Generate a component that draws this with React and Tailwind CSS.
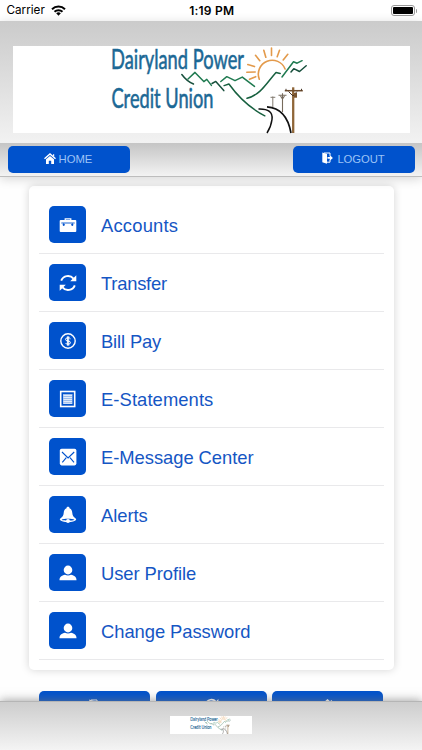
const BLUE = '#0052cc'

function Logo({ className }) {
  return (
    <svg viewBox="12.5 46 397 87" preserveAspectRatio="none" className={className} fill="none" overflow="visible">
      <rect x="12.5" y="46" width="397" height="87" fill="#fff" />
      <g fill="#1b6895" stroke="#1b6895" strokeWidth="0.6" fontFamily="Lato, 'Liberation Sans', sans-serif" fontSize="27">
        <text x="110.5" y="68.500" textLength="133" lengthAdjust="spacingAndGlyphs">Dairyland Power</text>
        <text x="111" y="107.800" textLength="102" lengthAdjust="spacingAndGlyphs">Credit Union</text>
      </g>
      {/* sun */}
      <g stroke="#e39a4b" strokeWidth="1.6" strokeLinecap="round">
        <path d="M258.8 79.2A13.7 13.7 0 1 1 284.6 69" />
        <path d="M271 48v7.5M263.3 50.3l2 7M279 50.3l-2.3 6.4M255 55.3l4.3 5.4M287.3 54.3l-4.6 5.7M247.3 64.6l6.7 2M246.3 72.3l8.4-.3M249 79.3l6.2-2.6" />
      </g>
      {/* mountains */}
      <g stroke="#1f7a50" strokeWidth="1.5" strokeLinecap="round" strokeLinejoin="round">
        <path d="M181.3 74.5Q186.5 81.5 193 84" stroke="#174f3c" />
        <path d="M187.5 79l7-6.6 8.8 9.2 3-2.2 4.6 6" />
        <path d="M211.5 83.5l3.8-2.1 8 9.2" stroke="#174f3c" />
        <path d="M220.3 81.5l6-4.8 8.2 4 7.3-3.6L254 86.4" />
        <path d="M223.6 85.6l4.8-1.6Q244 105.500 264.300 115.800" stroke="#17603f" />
        <path d="M246.500 98.300C260 95 266 83 275.500 72.400l4.200 1" stroke="#17603f" />
        <path d="M281.500 77L293 61.800l3.600 1.400 5-2.500" />
        <path d="M290.500 72l2.800-3.300 5.700 2.800 6.700-5.700" stroke="#174f3c" />
      </g>
      {/* road */}
      <path d="M258 109Q273 108.500 271.500 119.500 270.500 127 266.500 133" stroke="#111" strokeWidth="1.500" />
      <path d="M266.500 106.800Q286 108 290.500 133" stroke="#111" strokeWidth="1.700" />
      {/* utility poles */}
      <path d="M272.300 96.500V107M270 97.300h4.800" stroke="#827b70" strokeWidth="1" />
      <path d="M282 93.300V112M278 95.200h8M280 96l2 3 2-3" stroke="#776b5c" strokeWidth="1.100" />
      <path d="M292.700 87.300V133" stroke="#8f6638" strokeWidth="2.300" />
      <path d="M284.300 90.700h18" stroke="#6c4a2b" strokeWidth="1.500" />
      <path d="M285.500 88.800v1.700M301 88.800v1.700M288 91.500l4.500 4.500 4-4.500" stroke="#493728" strokeWidth="1" />
      <rect x="293.500" y="93" width="3" height="4.700" fill="#79542f" />
    </svg>
  )
}

function HomeIcon({ className }) {
  return (
    <svg viewBox="0 0 12 11" className={className} fill="none">
      <path d="M.5 5.700 6 1l5.500 4.700" stroke="#fff" strokeWidth="1.500" />
      <path d="M2 6.200 6 2.900l4 3.300V11H7.200V7.800H4.800V11H2z" fill="#fff" />
      <path d="M9 1.200h1.200v2.500L9 2.700z" fill="#fff" />
    </svg>
  )
}

function LogoutIcon({ className }) {
  return (
    <svg viewBox="0 0 11 12" className={className} fill="none">
      <path d="M.3.500 5 1.900V11.800L.3 10.200z" fill="#fff" />
      <path d="M2 1h6v2.700M8 7.800v2.400H5" stroke="#fff" />
      <path d="M5.500 5h2.300V3l3.100 2.900-3.100 2.900V6.800H5.500z" fill="#fff" />
    </svg>
  )
}

function RefreshIcon({ className }) {
  return (
    <svg viewBox="0 0 18 18" className={className} fill="none">
      <path d="M2.200 6.700A7.200 7.200 0 0 1 14.500 4.600M15.800 11.300A7.200 7.200 0 0 1 3.500 13.400" stroke="#fff" strokeWidth="1.900" />
      <path d="M17.300 1.200v6.100h-6.100zM.7 16.800v-6.100h6.100z" fill="#fff" />
    </svg>
  )
}

function BriefcaseIcon() {
  return (
    <svg viewBox="0 0 18 18" className="size-[18px]" fill="none">
      <path d="M6.200 4.500V2.900h5.600v1.600" stroke="#fff" strokeWidth="1.200" />
      <rect x=".7" y="4" width="16.600" height="12" rx="1" fill="#fff" />
      <path d="M2.300 7h13.400M4.700 7.200v2.300M13.300 7.200v2.300" stroke={BLUE} strokeWidth=".9" />
      <path d="M3.700 8h2v1.300l-1 .8-1-.8zM12.300 8h2v1.300l-1 .8-1-.8z" fill={BLUE} />
    </svg>
  )
}

function DollarIcon() {
  return (
    <svg viewBox="0 0 18 18" className="size-[18px]" fill="none" stroke="#fff">
      <circle cx="9" cy="9" r="7.200" strokeWidth="1.400" />
      <path d="M11.500 6.800Q11 5.800 9 5.800 6.500 5.800 6.500 7.400 6.500 8.800 9 9 11.500 9.200 11.500 10.700 11.500 12.200 9 12.200 7 12.200 6.500 11M8.400 4.300v9.400M9.700 4.300v9.400" />
    </svg>
  )
}

function DocumentIcon() {
  return (
    <svg viewBox="0 0 18 18" className="size-[18px]" fill="none" stroke="#fff">
      <rect x="1.700" y="1.500" width="14" height="15" strokeWidth="1.600" />
      <rect x="4" y="4" width="9.500" height="10" fill="#9bbcec" stroke="none" />
      <path d="M4.500 5.500h8.500M4.500 7.500h8.500M4.500 9.500h8.500M4.500 11.500h8.500M4.500 13.300h8.500" strokeWidth=".7" />
    </svg>
  )
}

function MessageIcon() {
  return (
    <svg viewBox="0 0 18 18" className="size-[18px]" fill="none">
      <rect x=".8" y=".8" width="16.600" height="16.600" rx="1.800" fill="#fff" />
      <path d="M3 4l6.100 6L15.200 4M3.300 14.400l4-4.700M15 14.400l-4-4.700" stroke={BLUE} strokeWidth="1.100" />
    </svg>
  )
}

function BellIcon() {
  return (
    <svg viewBox="0 0 18 18" className="size-[18px]">
      <path d="M9 .8c-1 0-1.500.6-1.500 1.400C5.300 3 4.900 5 4.700 7c-.3 2.600-1 3.700-2.800 5-1 .7-1.300 1.300-.9 1.900.8 1.200 4.200 2.100 8 2.100s7.200-.9 8-2.100c.4-.6.1-1.200-.9-1.900-1.800-1.300-2.500-2.400-2.800-5-.2-2-.6-4-2.800-4.800C10.500 1.400 10 .8 9 .8z" fill="#fff" />
      <path d="M2.600 13.800c2-1.300 10.800-1.300 12.800 0-2 1.200-10.800 1.200-12.800 0z" fill={BLUE} />
      <circle cx="9" cy="14.900" r="2" fill="#fff" />
    </svg>
  )
}

function UserIcon() {
  return (
    <svg viewBox="0 0 18 18" className="size-[18px]" fill="#fff">
      <ellipse cx="9" cy="6" rx="4.300" ry="4.400" />
      <path d="M.5 16.300c0-3.300 2.100-4.800 5.500-5.500 1.900 1 4.100 1 6 0 3.400.7 5.500 2.200 5.500 5.500z" />
    </svg>
  )
}

const menu = [
  { label: 'Accounts', tracking: 'tracking-[0.200px]', icon: <BriefcaseIcon /> },
  { label: 'Transfer', tracking: 'tracking-[-0.250px]', icon: <RefreshIcon className="size-[18px]" /> },
  { label: 'Bill Pay', tracking: 'tracking-[-0.150px]', icon: <DollarIcon /> },
  { label: 'E-Statements', tracking: 'tracking-[0.080px]', icon: <DocumentIcon /> },
  { label: 'E-Message Center', tracking: 'tracking-[-0.050px]', icon: <MessageIcon /> },
  { label: 'Alerts', tracking: 'tracking-[-0.050px]', icon: <BellIcon /> },
  { label: 'User Profile', tracking: 'tracking-[-0.080px]', icon: <UserIcon /> },
  { label: 'Change Password', tracking: 'tracking-[-0.060px]', icon: <UserIcon /> },
]

function MenuRow({ icon, label, tracking }) {
  return (
    <li className="flex h-[58px] items-center border-b border-[#e9e9eb] pl-[10px]">
      <span className="flex size-[37px] items-center justify-center rounded-[5px] bg-[#0052cc]">{icon}</span>
      <span className={`ml-[15px] mt-[2px] text-[18.4px] leading-6 whitespace-nowrap text-[#1556c4] ${tracking}`}>{label}</span>
    </li>
  )
}

function StatusBar() {
  return (
    <div className="flex h-[21px] shrink-0 items-center bg-white font-['Inter','Liberation_Sans',sans-serif] text-[12px] text-black">
      <div className="flex flex-1 items-center gap-[5px] pt-px pl-[6.500px]">
        <span className="w-[39px] text-[11.700px]">Carrier</span>
        <svg viewBox="0 0 15 11" className="h-[11px] w-[15px]" fill="none" stroke="#000" strokeWidth="2">
          <path d="M1 4.200a9.300 9.300 0 0 1 13 0M3.500 6.800a5.700 5.700 0 0 1 8 0" />
          <path d="M5.200 8.300a3.300 3.300 0 0 1 4.600 0L7.500 10.700z" fill="#000" stroke="none" />
        </svg>
      </div>
      <span className="pt-px text-[12px] font-semibold tracking-[0.250px]">1:19 PM</span>
      <div className="flex flex-1 items-center justify-end pr-[5px]">
        <span className="h-[11px] w-[24px] rounded-[3px] border border-[#999] p-px">
          <span className="block h-full rounded-[1px] bg-black" />
        </span>
        <span className="ml-px h-[4px] w-[1.500px] rounded-r bg-[#999]" />
      </div>
    </div>
  )
}

export default function App() {
  const tabs = [
    <LogoutIcon className="h-[12px] w-[11px]" />,
    <RefreshIcon className="-mt-px size-[15px]" />,
    <HomeIcon className="h-[12px] w-[13px]" />,
  ]

  return (
    <div className="flex h-[750px] w-[422px] flex-col overflow-hidden bg-[#fefefe] font-['Liberation_Sans',Arial,sans-serif]">
      <StatusBar />

      <header className="relative z-10 shrink-0 shadow-[0_2px_10px_rgba(0,0,0,0.160)]">
        <div className="h-[122px] bg-linear-to-b from-[#cbcbcb] to-[#f2f2f2] pl-[12.500px] pt-[25px]">
          <Logo className="block h-[87px] w-[397px]" />
        </div>
        <nav className="flex h-[34px] justify-between border-b border-[#bdbdbd] bg-linear-to-b from-[#c5c5c5] to-[#f3f3f3] px-[7.500px] pt-[3px]">
          <button className="flex h-[27px] w-[122px] items-center justify-center gap-[3px] rounded-[5px] bg-[#0052cc] text-[12px] text-[#9cc3f7]">
            <HomeIcon className="-mt-[2px] h-[11px] w-[12px]" />
            <span className="-mr-[4px] w-[39px] text-left text-[11.300px]">HOME</span>
          </button>
          <button className="flex h-[27px] w-[122px] items-center justify-center gap-[4px] rounded-[5px] bg-[#0052cc] text-[12px] text-[#9cc3f7]">
            <LogoutIcon className="-mt-[3px] h-[12px] w-[11px]" />
            <span className="text-[11.300px] tracking-[-0.100px]">LOGOUT</span>
          </button>
        </nav>
      </header>

      <main className="relative min-h-0 flex-1 overflow-hidden pt-[9px]">
        <ul className="mr-[28px] ml-[29px] h-[484px] rounded-[5px] bg-white px-[10px] pt-[10px] shadow-[0_0_9px_rgba(0,0,0,0.170)]">
          {menu.map((item) => (
            <MenuRow key={item.label} {...item} />
          ))}
        </ul>
        <div className="mt-[21px] ml-[39px] flex gap-[5.500px]">
          {tabs.map((icon, i) => (
            <div key={i} className="flex h-[34px] w-[111px] justify-center rounded-[5px] bg-[#0052cc] pt-[8px]">
              {icon}
            </div>
          ))}
        </div>
      </main>

      <footer className="relative z-10 flex h-[49px] shrink-0 justify-center border-t border-[#b5b5b5] bg-linear-to-b from-[#cdcdcd] to-[#f4f4f4] pt-[14px] shadow-[0_-1px_9px_rgba(120,120,120,0.650)]">
        <Logo className="h-[18px] w-[82px]" />
      </footer>
    </div>
  )
}
